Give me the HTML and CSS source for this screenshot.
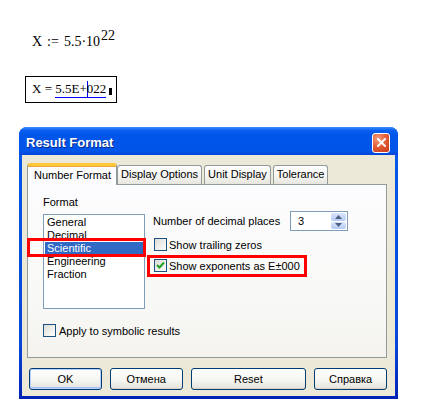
FILE: index.html
```html
<!DOCTYPE html>
<html lang="en">

<head>
    <meta charset="utf-8">
    <title>Result Format</title>
    <link rel="stylesheet" href="styles.css">
</head>

<body>
    <section class="sheet">
        <div class="def">X := 5.5&middot;10<sup>22</sup></div>
        <div class="result">X = <span class="val">5.5E+<span class="caret"></span>022</span><span class="blk"></span></div>
    </section>

    <section class="dialog">
        <div class="titlebar">
            <span class="title">Result Format</span>
            <button class="close">
                <svg width="9" height="9" viewBox="0 0 9 9"><path d="M1 1 L8 8 M8 1 L1 8" stroke="#fff" stroke-width="2" stroke-linecap="square"/></svg>
            </button>
        </div>
        <div class="body">
            <nav class="tabs">
                <button class="tab valgt">Number Format</button>
                <button class="tab">Display Options</button>
                <button class="tab">Unit Display</button>
                <button class="tab">Tolerance</button>
            </nav>
            <div class="panel">
                <div class="cols">
                    <div class="fmt">
                        <div class="lbl">Format</div>
                        <ul class="list">
                            <li>General</li>
                            <li>Decimal</li>
                            <li class="sel">Scientific<span class="mark mark-sci"></span></li>
                            <li>Engineering</li>
                            <li>Fraction</li>
                        </ul>
                    </div>
                    <div class="opts">
                        <div class="row">
                            <span class="places">Number of decimal places</span>
                            <div class="spin">
                                <span class="num">3</span>
                                <div class="arrows">
                                    <span class="up"><svg width="7" height="4" viewBox="0 0 7 4"><path d="M0 4 L3.5 0 L7 4Z" fill="#4d6185"/></svg></span>
                                    <span class="down"><svg width="7" height="4" viewBox="0 0 7 4"><path d="M0 0 L3.5 4 L7 0Z" fill="#4d6185"/></svg></span>
                                </div>
                            </div>
                        </div>
                        <label class="check">
                            <span class="box"></span>Show trailing zeros
                        </label>
                        <label class="check">
                            <span class="box"><svg width="11" height="11" viewBox="0 0 11 11"><path d="M2 5 L4.5 7.5 L9 2.5" fill="none" stroke="#21a121" stroke-width="2"/></svg></span>Show exponents as E&plusmn;000
                            <span class="mark mark-exp"></span>
                        </label>
                    </div>
                </div>
                <label class="check apply">
                    <span class="box"></span>Apply to symbolic results
                </label>
            </div>
            <div class="buttons">
                <button class="btn ok">OK</button>
                <button class="btn">Отмена</button>
                <button class="btn wide">Reset</button>
                <button class="btn">Справка</button>
            </div>
        </div>
    </section>
</body>

</html>
```

FILE: styles.css
```css
* {
    box-sizing: border-box;
}

body {
    margin: 0;
    background: white;
    font-family: "Liberation Sans", Arial, sans-serif;
    font-size: 11px;
}

/* mathcad worksheet */
.sheet {
    height: 127px;
    padding: 33px 0 0 25px;
    font-family: "Liberation Serif", serif;
    font-size: 13px;
}

.def {
    padding-left: 7px;
    font-size: 14px;
    line-height: 17px;
    word-spacing: 1.5px;
}

.def sup {
    font-size: 14px;
    line-height: 0;
    margin-left: 1px;
    vertical-align: 6px;
}

.result {
    display: inline-block;
    margin-top: 26px;
    width: 92px;
    height: 27px;
    border: 1px solid black;
    padding: 4px 0 0 6px;
    line-height: 16px;
}

.val {
    position: relative;
    border-bottom: 1px solid #0000ff;
    padding-bottom: 1px;
}

.caret {
    display: inline-block;
    width: 1px;
    height: 16px;
    margin-right: -1px;
    background: #0000ff;
    vertical-align: -4px;
}

.blk {
    display: inline-block;
    width: 3px;
    height: 7px;
    margin-left: 3px;
    background: black;
    vertical-align: -2px;
}

/* dialog */
.dialog {
    width: 379px;
    height: 272px;
    margin-left: 19px;
    padding: 0 3px 3px;
    border-radius: 8px 8px 0 0;
    background: linear-gradient(#0a5de8, #0555e6 20%, #0848d8 80%, #0021b5);
    display: flex;
    flex-direction: column;
}

.titlebar {
    height: 28px;
    display: flex;
    align-items: center;
    justify-content: space-between;
    margin: 0 -3px;
    padding: 3px 8px 0 7px;
    border-radius: 8px 8px 0 0;
    background: linear-gradient(#3c8dff, #0a5ff0 12%, #0055ea 30%, #0155e8 85%, #0245d8);
}

.title {
    color: white;
    font-weight: bold;
    font-size: 13px;
    text-shadow: 1px 1px 0 #0a2a8a;
}

.close {
    width: 18px;
    height: 20px;
    padding: 0;
    border: 1px solid white;
    border-radius: 3px;
    background: radial-gradient(circle at 30% 25%, #f59a7c, #e25a33 50%, #c6391b);
    display: flex;
    align-items: center;
    justify-content: center;
}

.body {
    flex: 1;
    background: #ece9d8;
    padding: 8px 8px 0 5px;
}

.tabs {
    display: flex;
    height: 21px;
    align-items: flex-end;
}

.tab {
    font: inherit;
    color: black;
    height: 19px;
    margin-right: 2px;
    padding: 0 3px 2px;
    border: 1px solid #919b9c;
    border-bottom: none;
    border-radius: 3px 3px 0 0;
    background: linear-gradient(#ffffff, #f3f3ef 60%, #e6e5de);
}

.tab.valgt {
    height: 22px;
    margin-right: 0;
    margin-bottom: -1px;
    padding: 0 5px 2px 6px;
    position: relative;
    z-index: 1;
    border-top: 3px solid #ffc83c;
    background: #fcfcfe;
    box-shadow: inset 0 1px 0 #e9a63c;
}

.panel {
    height: 174px;
    border: 1px solid #919b9c;
    background: linear-gradient(#fcfcfe, #f8f8f6 70%, #f4f3ee);
    padding: 11px 0 0 15px;
}

.cols {
    display: flex;
    gap: 8px;
}

.lbl {
    line-height: 13px;
}

.list {
    list-style: none;
    margin: 5px 0 0;
    padding: 1px;
    width: 102px;
    height: 95px;
    border: 1px solid #7f9db9;
    background: white;
}

.list li {
    position: relative;
    height: 13px;
    line-height: 13px;
    padding-left: 2px;
}

.list li.sel {
    background: #316ac5;
    color: white;
}

.mark {
    position: absolute;
    border: 3px solid #ff0000;
}

.mark-sci {
    left: -18px;
    top: -4px;
    width: 119px;
    height: 19px;
}

.opts {
    margin-top: 15px;
    display: flex;
    flex-direction: column;
}

.row {
    display: flex;
    align-items: center;
    height: 20px;
    margin-bottom: 7px;
}

.places {
    width: 137px;
}

.spin {
    width: 58px;
    height: 20px;
    border: 1px solid #7f9db9;
    background: white;
    display: flex;
    justify-content: space-between;
    padding: 1px;
}

.num {
    padding-left: 6px;
    line-height: 16px;
}

.arrows {
    width: 15px;
    display: flex;
    flex-direction: column;
    gap: 1px;
}

.arrows span {
    flex: 1;
    border-radius: 2px;
    background: linear-gradient(#d8e4fc, #b6cbf6);
    display: flex;
    align-items: center;
    justify-content: center;
}

.check {
    position: relative;
    display: flex;
    align-items: center;
    height: 13px;
    margin-left: 1px;
    margin-bottom: 8px;
}

.box {
    width: 13px;
    height: 13px;
    margin-right: 2px;
    border: 1px solid #1c5180;
    background: linear-gradient(135deg, #dcdcd7, #ffffff);
    display: flex;
    align-items: center;
    justify-content: center;
}

.mark-exp {
    left: -7px;
    top: -4px;
    width: 160px;
    height: 22px;
}

.apply {
    margin: 15px 0 0;
}

.apply .box {
    margin-right: 3px;
}

.buttons {
    display: flex;
    gap: 8px;
    margin-top: 10px;
    padding-left: 2px;
}

.btn {
    font: inherit;
    color: black;
    width: 73px;
    height: 22px;
    border: 1px solid #003c74;
    border-radius: 3px;
    background: linear-gradient(#ffffff, #f4f4f0 60%, #e3e2da);
    box-shadow: inset 0 -1px 0 #d6d0c5;
}

.btn.wide {
    width: 116px;
}

.btn.ok {
    box-shadow: inset 0 0 0 1px #b9d1fa, inset 0 -2px 0 #a5c0f2;
}
```
